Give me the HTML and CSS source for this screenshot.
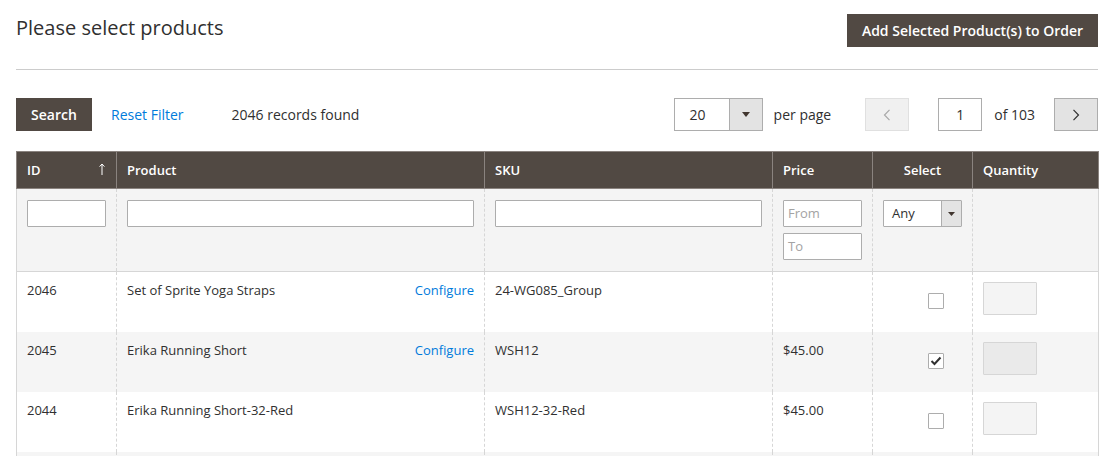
FILE: index.html
```html
<!DOCTYPE html>
<html lang="en">
<head>
<meta charset="utf-8">
<title>Please select products</title>
<link rel="stylesheet" href="styles.css">
</head>
<body>
<div class="page">
  <div class="page-head">
    <h1 class="title">Please select products</h1>
    <button class="btn btn-primary" type="button">Add Selected Product(s) to Order</button>
  </div>
  <div class="divider"></div>

  <div class="toolbar">
    <button class="btn btn-search" type="button">Search</button>
    <a class="link reset" href="#">Reset Filter</a>
    <span class="records">2046 records found</span>

    <div class="pager">
      <div class="select per-page">
        <span class="select-value">20</span>
        <span class="select-arrow"><svg width="8" height="5" viewBox="0 0 8 5"><path d="M0 0H8L4 5Z" fill="#41362f"/></svg></span>
      </div>
      <span class="per-page-label">per page</span>
      <button class="page-btn prev" type="button" aria-label="Previous page"><svg width="8" height="12" viewBox="0 0 8 12"><path d="M6.5 0.8L1.5 6L6.5 11.2" fill="none" stroke="#a8a8a8" stroke-width="1.2"/></svg></button>
      <div class="page-input"><span>1</span></div>
      <span class="of-pages">of 103</span>
      <button class="page-btn next" type="button" aria-label="Next page"><svg width="8" height="12" viewBox="0 0 8 12"><path d="M1.5 0.8L6.5 6L1.5 11.2" fill="none" stroke="#303030" stroke-width="1.2"/></svg></button>
    </div>
  </div>

  <table class="grid">
    <colgroup>
      <col class="c-id"><col class="c-product"><col class="c-sku"><col class="c-price"><col class="c-select"><col class="c-qty">
    </colgroup>
    <thead>
      <tr class="head-row">
        <th><div class="th-sort"><span>ID</span><svg class="sort-arrow" width="6" height="12" viewBox="0 0 6 12"><path d="M3 12V1M0.6 3.6L3 1L5.4 3.6" fill="none" stroke="#fff" stroke-width="1"/></svg></div></th>
        <th>Product</th>
        <th>SKU</th>
        <th>Price</th>
        <th class="center">Select</th>
        <th>Quantity</th>
      </tr>
      <tr class="filter-row">
        <td><input class="f-input" type="text" aria-label="ID filter"></td>
        <td><input class="f-input" type="text" aria-label="Product filter"></td>
        <td><input class="f-input" type="text" aria-label="SKU filter"></td>
        <td>
          <div class="f-box"><span class="ph">From</span></div>
          <div class="f-box gap"><span class="ph">To</span></div>
        </td>
        <td>
          <div class="f-box f-select"><span class="select-value small">Any</span><span class="select-arrow small"><svg width="7" height="4" viewBox="0 0 7 4"><path d="M0 0H7L3.5 4Z" fill="#41362f"/></svg></span></div>
        </td>
        <td></td>
      </tr>
    </thead>
    <tbody>
      <tr>
        <td>2046</td>
        <td><div class="prod"><span>Set of Sprite Yoga Straps</span><a class="link" href="#">Configure</a></div></td>
        <td>24-WG085_Group</td>
        <td></td>
        <td class="sel"><span class="cb"></span></td>
        <td><span class="qty"></span></td>
      </tr>
      <tr class="even">
        <td>2045</td>
        <td><div class="prod"><span>Erika Running Short</span><a class="link" href="#">Configure</a></div></td>
        <td>WSH12</td>
        <td>$45.00</td>
        <td class="sel"><span class="cb checked"><svg width="12" height="10" viewBox="0 0 12 10"><path d="M1.5 5L4.5 8L10.5 1.5" fill="none" stroke="#303030" stroke-width="2"/></svg></span></td>
        <td><span class="qty"></span></td>
      </tr>
      <tr>
        <td>2044</td>
        <td><div class="prod"><span>Erika Running Short-32-Red</span></div></td>
        <td>WSH12-32-Red</td>
        <td>$45.00</td>
        <td class="sel"><span class="cb"></span></td>
        <td><span class="qty"></span></td>
      </tr>
      <tr class="even tail">
        <td></td><td></td><td></td><td></td><td></td><td></td>
      </tr>
    </tbody>
  </table>
</div>
</body>
</html>
```

FILE: styles.css
```css
html, body {
  margin: 0;
  padding: 0;
  overflow: hidden;
  background: #fff;
}
body {
  font-family: "Open Sans", "Liberation Sans", sans-serif;
  color: #303030;
  font-size: 14px;
}
.page {
  padding: 0 16px;
}
.page-head {
  display: flex;
  justify-content: space-between;
  align-items: flex-start;
  padding-top: 14px;
}
.title {
  margin: 0;
  font-size: 20px;
  font-weight: 400;
  line-height: 28px;
  color: #303030;
}
.btn {
  font-family: inherit;
  font-size: 14px;
  font-weight: 600;
  line-height: 19px;
  color: #fff;
  background: #514943;
  border: 1px solid #514943;
  height: 33px;
  padding: 0;
  border-radius: 0;
  white-space: nowrap;
  cursor: pointer;
}
.btn-primary {
  width: 251px;
}
.btn-search {
  width: 76px;
}
.divider {
  margin-top: 22px;
  border-top: 1px solid #cccccc;
}
.toolbar {
  display: flex;
  align-items: center;
  margin-top: 28px;
  height: 33px;
}
.link {
  color: #007bdb;
  text-decoration: none;
}
.reset {
  margin-left: 19px;
}
.records {
  margin-left: 48px;
}
.pager {
  margin-left: auto;
  display: flex;
  align-items: center;
}
.select {
  display: flex;
  box-sizing: border-box;
  border: 1px solid #adadad;
  background: #fff;
}
.per-page {
  width: 89px;
  height: 33px;
}
.select-value {
  flex: 1;
  padding-left: 15px;
  line-height: 31px;
}
.select-arrow {
  width: 32px;
  border-left: 1px solid #adadad;
  background: #e3e3e3;
  display: flex;
  align-items: center;
  justify-content: center;
}
.per-page-label {
  margin-left: 11px;
}
.page-btn {
  box-sizing: border-box;
  width: 44px;
  height: 33px;
  padding: 0;
  display: flex;
  align-items: center;
  justify-content: center;
  cursor: pointer;
}
.prev {
  margin-left: 34px;
  background: #f0f0f0;
  border: 1px solid #e0e0e0;
}
.next {
  margin-left: 19px;
  background: #e3e3e3;
  border: 1px solid #adadad;
}
.page-input {
  box-sizing: border-box;
  margin-left: 29px;
  width: 44px;
  height: 33px;
  border: 1px solid #adadad;
  text-align: center;
  line-height: 31px;
}
.of-pages {
  margin-left: 12px;
}

.grid {
  margin-top: 20px;
  width: 100%;
  border-collapse: collapse;
  table-layout: fixed;
  border: 1px solid #d6d6d6;
  font-size: 13px;
}
.c-id { width: 100px; }
.c-product { width: 368px; }
.c-sku { width: 288px; }
.c-price { width: 100px; }
.c-select { width: 100px; }
.c-qty { width: 126px; }

.grid th {
  background: #514943;
  color: #fff;
  border: 1px solid #8a837f;
  padding: 9px 10px 9px;
  font-size: 13px;
  font-weight: 600;
  line-height: 18px;
  text-align: left;
}
.grid th.center {
  text-align: center;
}
.th-sort {
  display: flex;
  justify-content: space-between;
  align-items: flex-start;
}
.sort-arrow {
  margin-top: 2px;
  margin-right: 1px;
}
.grid td {
  border-left: 1px dashed #d6d6d6;
  border-right: 1px dashed #d6d6d6;
  padding: 9px 10px 17px;
  line-height: 18px;
  vertical-align: top;
}
.filter-row td {
  background: #f4f4f4;
  padding: 11px 10px 11px;
  border-bottom: 1px solid #d6d6d6;
}
.f-input,
.f-box {
  display: block;
  box-sizing: border-box;
  width: 100%;
  height: 27px;
  margin: 0;
  border: 1px solid #adadad;
  border-radius: 1px;
  background: #fff;
  font-family: inherit;
  font-size: 13px;
}
.f-box {
  padding-left: 4px;
  line-height: 25px;
}
.f-box.gap {
  margin-top: 6px;
}
.ph {
  color: #a3a3a3;
}
.f-select {
  display: flex;
  padding-left: 0;
}
.select-value.small {
  padding-left: 8px;
  line-height: 25px;
}
.select-arrow.small {
  width: 19px;
}
.even td {
  background: #f5f5f5;
}
.tail td {
  height: 40px;
}
.prod {
  display: flex;
  justify-content: space-between;
}
.sel {
  text-align: left;
}
.cb {
  display: flex;
  align-items: center;
  justify-content: center;
  box-sizing: border-box;
  width: 16px;
  height: 16px;
  margin: 12px 0 0 45px;
  border: 1px solid #adadad;
  border-radius: 1px;
  background: #fff;
}
.qty {
  display: block;
  box-sizing: border-box;
  width: 54px;
  height: 33px;
  margin-top: 1px;
  border: 1px solid #d6d6d6;
  border-radius: 1px;
  background: rgba(0, 0, 0, 0.045);
}
```
